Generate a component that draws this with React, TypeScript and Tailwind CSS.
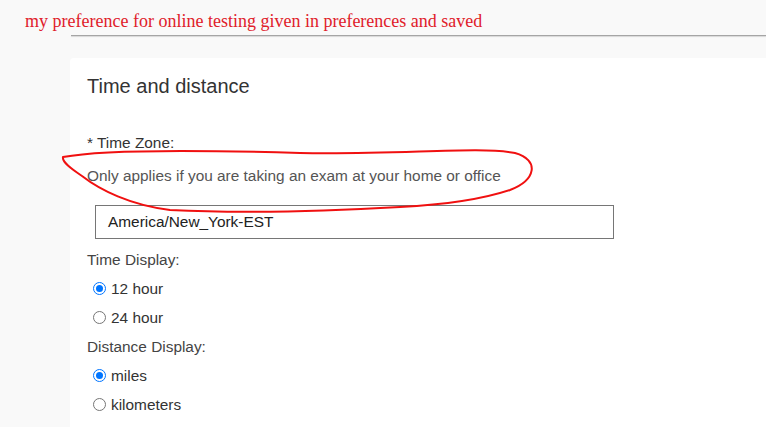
import React from 'react';

const sans = "font-['Arial','Liberation_Sans',sans-serif]";

function Radio({ label, checked }: { label: string; checked?: boolean }) {
  return (
    <label className="flex h-[29px] items-center">
      <span
        className={
          checked
            ? 'ml-[6px] flex h-[13px] w-[13px] items-center justify-center rounded-full border-[1px] border-[#0075ff] bg-white'
            : 'ml-[6px] flex h-[13px] w-[13px] items-center justify-center rounded-full border-[1px] border-[#767676] bg-white'
        }
      >
        {checked && <span className="h-[7px] w-[7px] rounded-full bg-[#0075ff]" />}
      </span>
      <span className="ml-[5px] text-[15.4px] text-[#333]">{label}</span>
    </label>
  );
}

export default function App() {
  return (
    <div className={`relative h-[427px] w-[766px] overflow-hidden bg-[#f9f9f9] ${sans}`}>
      {/* Header note */}
      <div className="pt-[9px]">
        <p className="pl-[25px] font-['Liberation_Serif','Times_New_Roman',serif] text-[18px] leading-[25px] text-[#e0202a]">
          my preference for online testing given in preferences and saved
        </p>
        <div className="ml-[71px] mt-[1px] h-[1px] bg-[#a5a5a5] shadow-[0_1px_1px_rgba(0,0,0,0.15)]" />
      </div>

      {/* Card */}
      <div className="ml-[70px] mt-[22px] h-[400px] rounded-l-[4px] bg-white pl-[17px] pt-[14px] text-[#333]">
        <h2 className="text-[20px] leading-[28px] text-[#333]">Time and distance</h2>

        <div className="mt-[33px] text-[15.4px] leading-[20px]">* Time Zone:</div>
        <div className="mt-[13px] text-[15.4px] leading-[20px] text-[#555]">
          Only applies if you are taking an exam at your home or office
        </div>

        <div className="ml-[8px] mt-[19px] flex h-[34px] w-[519px] items-center border border-[#767676] pl-[12px] text-[15.4px] text-[#222]">
          America/New_York-EST
        </div>

        <div className="mt-[6px]">
          <div className="flex h-[29px] items-center text-[15.4px] text-[#444]">Time Display:</div>
          <Radio label="12 hour" checked />
          <Radio label="24 hour" />
          <div className="flex h-[29px] items-center text-[15.4px] text-[#444]">Distance Display:</div>
          <Radio label="miles" checked />
          <Radio label="kilometers" />
        </div>
      </div>

      {/* Red hand-drawn annotation */}
      <svg
        className="pointer-events-none absolute left-0 top-0"
        width="766"
        height="427"
        viewBox="0 0 766 427"
        fill="none"
      >
        <path
          d="M63,157 C100,150 200,150 300,153 C400,155 480,146 515,153 C540,160 536,180 510,190 C480,200 440,205 400,207 C330,211 250,214 170,210 C130,205 100,190 82,176 C70,168 62,162 63,157"
          stroke="#f01010"
          strokeWidth="2"
          strokeLinecap="round"
        />
      </svg>
    </div>
  );
}
